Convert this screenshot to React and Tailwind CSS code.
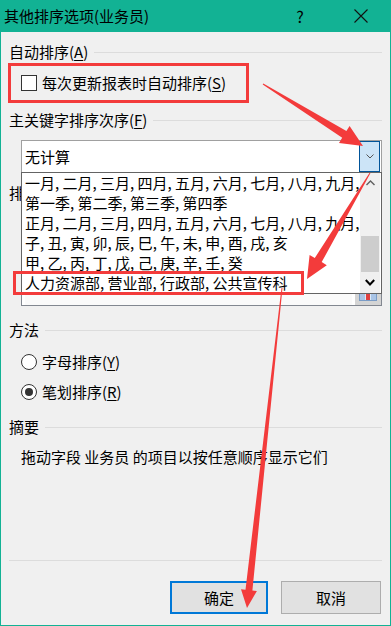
import React from "react"

const RED = "#f33b3b"

function arrow(x0, y0, x1, y1, w0, w1, hl, hw) {
  const dx = x1 - x0
  const dy = y1 - y0
  const len = Math.hypot(dx, dy)
  const ux = dx / len
  const uy = dy / len
  const nx = -uy
  const ny = ux
  const bx = x1 - ux * hl
  const by = y1 - uy * hl
  const p = [
    [x0 + (nx * w0) / 2, y0 + (ny * w0) / 2],
    [bx + (nx * w1) / 2, by + (ny * w1) / 2],
    [bx + (nx * hw) / 2, by + (ny * hw) / 2],
    [x1, y1],
    [bx - (nx * hw) / 2, by - (ny * hw) / 2],
    [bx - (nx * w1) / 2, by - (ny * w1) / 2],
    [x0 - (nx * w0) / 2, y0 - (ny * w0) / 2],
  ]
  return p.map((q) => q[0].toFixed(1) + "," + q[1].toFixed(1)).join(" ")
}

function Header({ children }) {
  return (
    <div className="flex items-center h-[20px] gap-[6px]">
      <span className="leading-[20px] whitespace-nowrap">{children}</span>
      <div className="flex-1 h-px bg-[#dcdcdc]" />
    </div>
  )
}

function Radio({ checked, children }) {
  return (
    <div className="flex items-center h-[20px] ml-3 gap-[5px]">
      <div className="w-[16px] h-[16px] rounded-full border border-[#333] bg-white flex items-center justify-center">
        {checked && <div className="w-[8px] h-[8px] rounded-full bg-[#333]" />}
      </div>
      <span className="leading-[20px]">{children}</span>
    </div>
  )
}

const items = [
  "一月, 二月, 三月, 四月, 五月, 六月, 七月, 八月, 九月, 十月, 十一月, 十二月",
  "第一季, 第二季, 第三季, 第四季",
  "正月, 二月, 三月, 四月, 五月, 六月, 七月, 八月, 九月, 十月, 十一月, 腊月",
  "子, 丑, 寅, 卯, 辰, 巳, 午, 未, 申, 酉, 戌, 亥",
  "甲, 乙, 丙, 丁, 戊, 己, 庚, 辛, 壬, 癸",
  "人力资源部, 营业部, 行政部, 公共宣传科",
]

export default function App() {
  return (
    <div
      className="relative w-[391px] h-[626px] flex flex-col bg-[#f0f0f0] border-x border-b border-[#12b294] text-[15px] text-black overflow-hidden"
      style={{ fontFamily: '"Noto Sans CJK SC", "Noto Sans", sans-serif' }}
    >
      {/* title bar */}
      <div className="h-[32px] bg-[#12b294] flex items-center -mx-px pl-[4px]">
        <span className="flex-1 leading-[20px]">其他排序选项(业务员)</span>
        <span className="w-[20px] text-center mr-[44px] text-[16px]">?</span>
        <svg width="14" height="14" viewBox="0 0 14 14" className="mr-[23px]">
          <path d="M0.5 0.5 L13.5 13.5 M13.5 0.5 L0.5 13.5" stroke="#111" strokeWidth="1.1" />
        </svg>
      </div>

      <div className="flex-1 flex flex-col px-2 pb-[11px]">
        <div className="mt-[10px]">
          <Header>
            自动排序(<u className="underline-offset-2">A</u>)
          </Header>
        </div>

        <div className="mt-px -ml-px w-[241px] h-[40px] border-[3px] border-[#f33b3b] flex items-center pl-[10px] gap-[5px]">
          <div className="w-[16px] h-[16px] border border-[#333] bg-white" />
          <span className="leading-[20px]">
            每次更新报表时自动排序(<u className="underline-offset-2">S</u>)
          </span>
        </div>

        <div className="mt-[7px]">
          <Header>
            主关键字排序次序(<u className="underline-offset-2">F</u>)
          </Header>
        </div>

        {/* combobox with open list */}
        <div className="relative mt-[10px] ml-3 h-[33px] border border-[#a0a0a0] bg-white flex items-center z-10">
          <span className="flex-1 pl-[3px] leading-[20px]">无计算</span>
          <div className="w-[21px] h-[31px] mr-px bg-[#cce4f7] border border-[#005499] flex items-center justify-center">
            <svg width="8" height="5" viewBox="0 0 8 5">
              <path d="M0.5 0.5 L4 4 L7.5 0.5" fill="none" stroke="#555" strokeWidth="1" />
            </svg>
          </div>

          <div className="absolute -left-px -right-px top-[31px] h-[122px] border border-[#646464] bg-white flex">
            <div className="flex-1 overflow-hidden pl-[3px]">
              {items.map((t) => (
                <div key={t} className="h-[20px] leading-[20px] whitespace-nowrap">
                  {t}
                </div>
              ))}
            </div>
            <div className="w-[20px] mr-px bg-[#f0f0f0] flex flex-col">
              <div className="h-[20px] flex items-center justify-center">
                <svg width="9" height="6" viewBox="0 0 9 6">
                  <path d="M0.5 5 L4.5 1 L8.5 5" fill="none" stroke="#606060" strokeWidth="1.4" />
                </svg>
              </div>
              <div className="h-[43px]" />
              <div className="h-[36px] mx-px bg-[#cdcdcd]" />
              <div className="flex-1 flex items-center justify-center">
                <svg width="10" height="7" viewBox="0 0 10 7">
                  <path d="M0.8 1 L5 5.5 L9.2 1" fill="none" stroke="#000" strokeWidth="2" />
                </svg>
              </div>
            </div>
          </div>
        </div>

        {/* underlying list box, mostly hidden by the open list */}
        <div className="mt-[10px] h-[20px] leading-[20px]">排序依据</div>
        <div className="mt-px ml-3 h-[102px] border border-[#828790] bg-white flex flex-col justify-end">
          <div className="flex h-[12px]">
            <div className="flex-1 mx-[3px] bg-[#fafafa]" />
            <div className="w-[26px] bg-[#d4d4d4] flex items-start justify-center">
              <div className="w-[18px] h-[8px] border border-[#7a9cc6] bg-[#dbe8f7] grid grid-cols-3 gap-px">
                <div className="bg-[#a9c4e6]" />
                <div className="bg-[#e04040]" />
                <div className="bg-[#a9c4e6]" />
              </div>
            </div>
          </div>
        </div>

        <div className="mt-[14px]">
          <Header>方法</Header>
        </div>
        <div className="mt-[12px]">
          <Radio>
            字母排序(<u className="underline-offset-2">Y</u>)
          </Radio>
        </div>
        <div className="mt-[10px]">
          <Radio checked>
            笔划排序(<u className="underline-offset-2">R</u>)
          </Radio>
        </div>

        <div className="mt-[15px]">
          <Header>摘要</Header>
        </div>
        <div className="mt-[10px] ml-3 h-[20px] leading-[20px] whitespace-nowrap">
          拖动字段 业务员 的项目以按任意顺序显示它们
        </div>

        <div className="flex-1" />
        <div className="h-px bg-[#dcdcdc]" />
        <div className="mt-[20px] flex justify-end gap-[13px] mr-px">
          <button className="w-[98px] h-[33px] bg-[#e1e1e1] border-2 border-[#0078d7] leading-[20px]">确定</button>
          <button className="w-[100px] h-[33px] bg-[#e1e1e1] border border-[#adadad] leading-[20px]">取消</button>
        </div>
      </div>

      {/* annotations */}
      <svg className="absolute inset-0 pointer-events-none z-20" width="391" height="626" viewBox="0 0 391 626">
        <rect x="13.5" y="272.5" width="288" height="21" fill="none" stroke={RED} strokeWidth="3" />
        <polygon points={arrow(262, 84, 362, 146, 1, 8, 22, 20)} fill={RED} />
        <polygon points={arrow(369, 173, 306, 279, 1, 8, 22, 20)} fill={RED} />
        <polygon points={arrow(281, 288, 246, 608, 1, 7, 18, 16)} fill={RED} />
      </svg>
    </div>
  )
}
